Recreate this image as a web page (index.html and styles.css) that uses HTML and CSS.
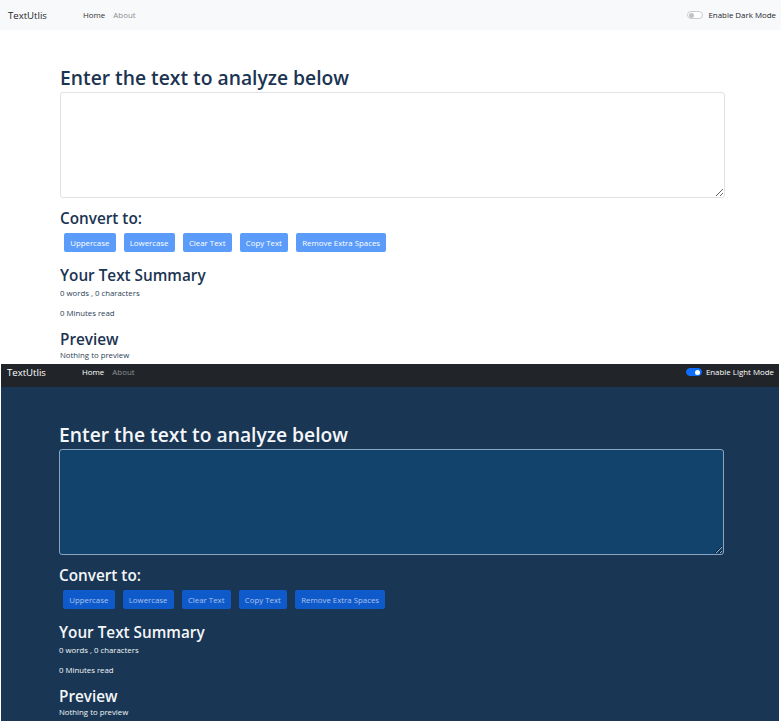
FILE: index.html
```html
<!DOCTYPE html>
<html lang="en">
<head>
<meta charset="utf-8">
<title>TextUtlis</title>
<link rel="stylesheet" href="styles.css">
</head>
<body>
<div class="screen light">
  <nav class="navbar">
    <span class="brand">TextUtlis</span>
    <ul class="nav-links">
      <li class="active">Home</li>
      <li>About</li>
    </ul>
    <label class="mode">
      <span class="switch"><span class="knob"></span></span>
      <span>Enable Dark Mode</span>
    </label>
  </nav>
  <main class="container">
    <h1>Enter the text to analyze below</h1>
    <textarea class="box" rows="8"></textarea>
    <h2 class="convert">Convert to:</h2>
    <div class="buttons">
      <button class="btn" disabled>Uppercase</button>
      <button class="btn" disabled>Lowercase</button>
      <button class="btn" disabled>Clear Text</button>
      <button class="btn" disabled>Copy Text</button>
      <button class="btn" disabled>Remove Extra Spaces</button>
    </div>
    <h2 class="summary">Your Text Summary</h2>
    <p class="words">0 words , 0 characters</p>
    <p class="minutes">0 Minutes read</p>
    <h2 class="preview">Preview</h2>
    <p class="nothing">Nothing to preview</p>
  </main>
</div>
<div class="screen dark">
  <div class="shift">
    <nav class="navbar">
      <span class="brand">TextUtlis</span>
      <ul class="nav-links">
        <li class="active">Home</li>
        <li>About</li>
      </ul>
      <label class="mode">
        <span class="switch on"><span class="knob"></span></span>
        <span>Enable Light Mode</span>
      </label>
    </nav>
    <main class="container">
      <h1>Enter the text to analyze below</h1>
      <textarea class="box" rows="8"></textarea>
      <h2 class="convert">Convert to:</h2>
      <div class="buttons">
        <button class="btn" disabled>Uppercase</button>
        <button class="btn" disabled>Lowercase</button>
        <button class="btn" disabled>Clear Text</button>
        <button class="btn" disabled>Copy Text</button>
        <button class="btn" disabled>Remove Extra Spaces</button>
      </div>
      <h2 class="summary">Your Text Summary</h2>
      <p class="words">0 words , 0 characters</p>
      <p class="minutes">0 Minutes read</p>
      <h2 class="preview">Preview</h2>
      <p class="nothing">Nothing to preview</p>
    </main>
  </div>
</div>
</body>
</html>
```
FILE: styles.css
```css
* { box-sizing: border-box; }
html, body { margin: 0; padding: 0; background: #ffffff; }
body { font-family: "Open Sans", "Noto Sans", sans-serif; width: 782px; height: 721px; overflow: hidden; }

.screen { overflow: hidden; }
.light { height: 364px; width: 781px; background: #ffffff; color: #1b3452; }
.dark { height: 357px; width: 778px; margin-left: 1px; background: #193654; color: #f4f6f9; }
.dark .shift { margin-top: -7px; margin-left: -2px; }

.navbar { height: 30px; display: flex; align-items: center; padding: 0 5px 0 8px; }
.light .navbar { background: #f8f9fa; }
.dark .navbar { background: #212529; }

.brand { font-size: 9.6px; width: 75px; color: #212529; }
.dark .brand { color: #ffffff; }

.nav-links { list-style: none; margin: 0; padding: 0; display: flex; gap: 8px; font-size: 7.9px; flex: 1; }
.nav-links li { color: #8c8c8c; }
.nav-links li.active { color: #333333; }
.dark .nav-links li { color: #8d9196; }
.dark .nav-links li.active { color: #ffffff; }

.mode { display: flex; align-items: center; gap: 5px; font-size: 7.9px; color: #212529; }
.dark .mode { color: #ffffff; gap: 4px; }

.switch { width: 16px; height: 8px; border-radius: 4px; border: 1px solid #c9ccd0; background: #ffffff; display: flex; align-items: center; padding: 0 1px; }
.switch .knob { width: 5px; height: 5px; border-radius: 50%; background: #c0c3c7; }
.switch.on { background: #0d6efd; border-color: #0d6efd; justify-content: flex-end; }
.switch.on .knob { background: #ffffff; }

.container { padding-left: 60px; width: 727px; }

h1 { font-size: 19.3px; font-weight: 600; line-height: 24px; margin: 36px 0 2px 0; }
h2 { font-size: 15.3px; font-weight: 600; line-height: 20px; margin: 0; }

.box { display: block; width: 665px; height: 106px; border: 1px solid #dfe2e6; border-radius: 3px; background: #ffffff; resize: vertical; margin: 0; padding: 0; }
.dark .box { background: #12436c; border-color: #8aa4c2; }

.convert { margin-top: 10px; }
.buttons { display: flex; gap: 8px; margin: 5px 0 0 4px; }
.btn { font-family: inherit; font-size: 7.85px; height: 19px; padding: 0 6.2px; border: none; border-radius: 2px; background: #5b9cfb; color: #ffffff; }
.dark .btn { background: #0f5acb; color: #a9c2e9; }

.summary { margin-top: 13px; }
p { margin: 0; font-size: 7.8px; line-height: 12px; color: #2b3e55; }
.dark p { color: #f4f6f9; }
.words { margin-top: 2px; }
.minutes { margin-top: 8px; }
.preview { margin-top: 10px; }
.nothing { margin-top: 0; }
```
